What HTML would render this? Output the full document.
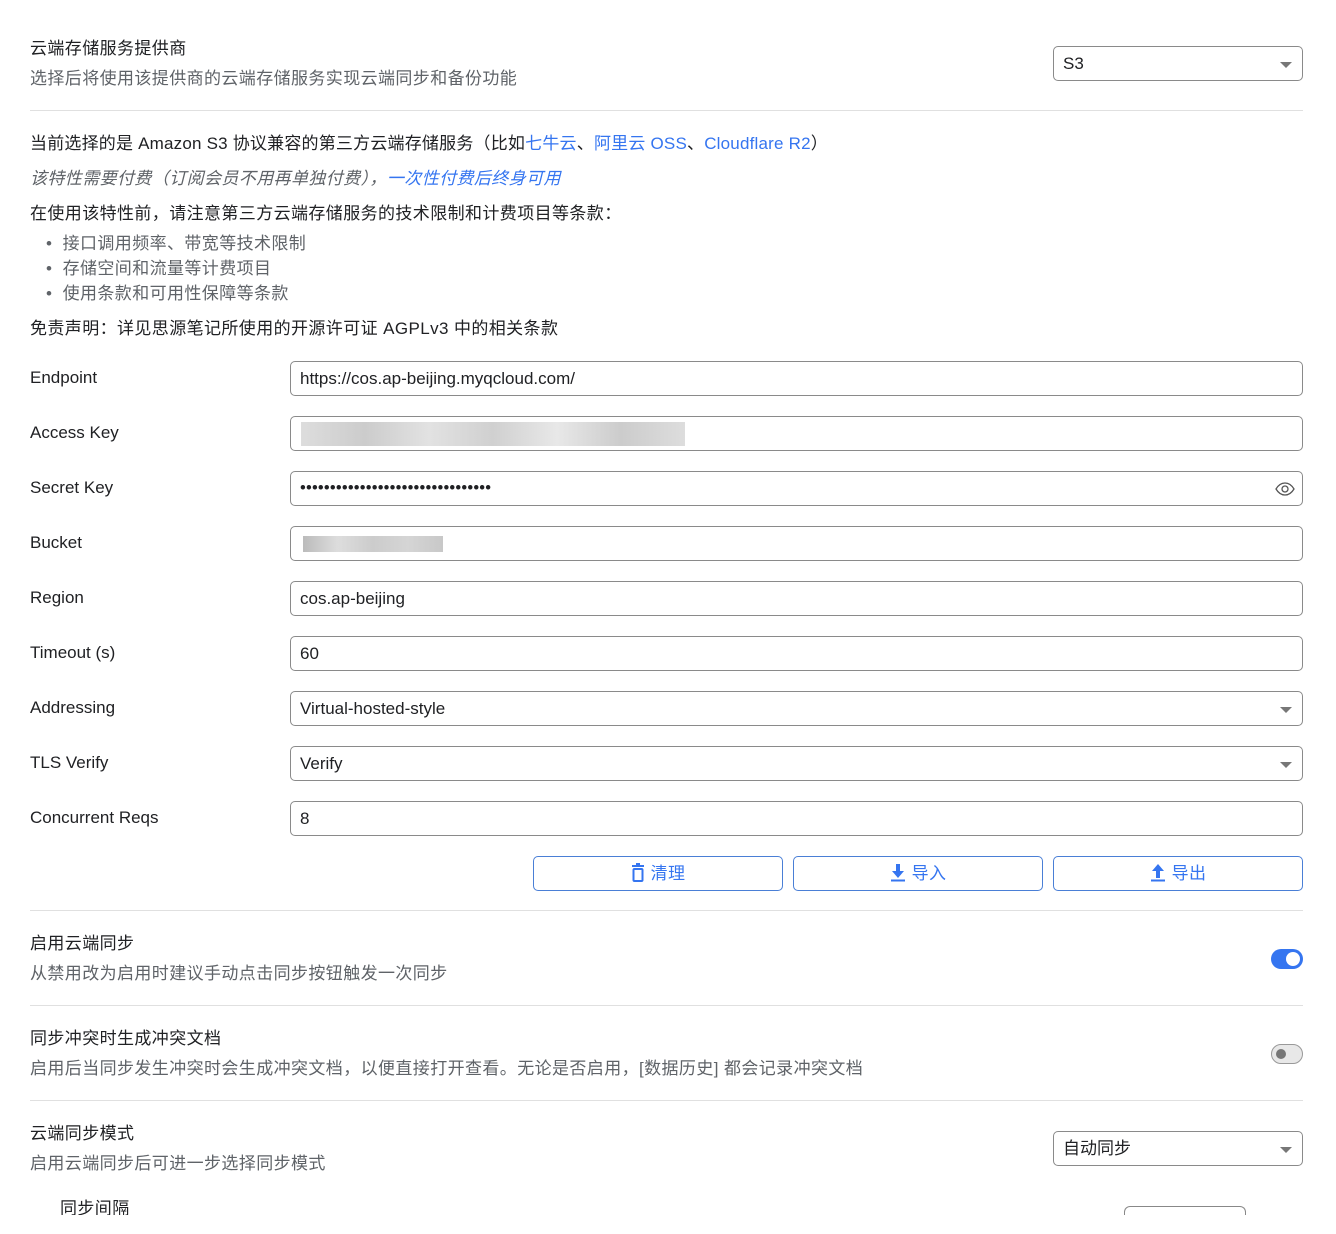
<!DOCTYPE html>
<html><head><meta charset="utf-8"><style>
*{box-sizing:border-box;margin:0;padding:0}
body{width:1336px;height:1234px;background:#fff;font-family:"Liberation Sans","Noto Sans CJK SC",sans-serif;font-size:17px;color:#202124;position:relative;overflow:hidden;letter-spacing:0.4px}
.a{position:absolute;white-space:nowrap}
.l{letter-spacing:0}
.g{color:#5f6368}
.b{color:#3575f0}
.hr{position:absolute;left:30px;width:1273px;height:1px;background:#e0e0e0}
.in{position:absolute;left:290px;width:1013px;height:35px;border:1px solid #8a8a8a;border-radius:5px;padding-left:9px;line-height:33px;font-size:17px;color:#202124;letter-spacing:0}
.sel::after{content:"";position:absolute;right:10px;top:15px;border-left:6px solid transparent;border-right:6px solid transparent;border-top:6px solid #777}
.btn{position:absolute;top:856px;width:250px;height:35px;border:1px solid #4a7fd6;border-radius:5px;color:#3575f0;text-align:center;line-height:33px;font-size:17px}
.btn svg{vertical-align:-3px;margin-right:6px}
</style></head><body>
<div class="a" style="left:30px;top:34px">云端存储服务提供商</div>
<div class="a g" style="left:30px;top:64px">选择后将使用该提供商的云端存储服务实现云端同步和备份功能</div>
<div class="in sel" style="left:1053px;width:250px;top:46px">S3</div>
<div class="hr" style="top:110px"></div>
<div class="a" style="left:30px;top:129px;letter-spacing:0.2px">当前选择的是 Amazon S3 协议兼容的第三方云端存储服务（比如<span class="b">七牛云</span>、<span class="b">阿里云 OSS</span>、<span class="b">Cloudflare R2</span>）</div>
<div class="a g" style="left:30px;top:164px;font-style:italic">该特性需要付费（订阅会员不用再单独付费），<span class="b">一次性付费后终身可用</span></div>
<div class="a" style="left:30px;top:199px">在使用该特性前，请注意第三方云端存储服务的技术限制和计费项目等条款：</div>
<div class="a g" style="left:46px;top:229px">•&nbsp; 接口调用频率、带宽等技术限制</div>
<div class="a g" style="left:46px;top:254px">•&nbsp; 存储空间和流量等计费项目</div>
<div class="a g" style="left:46px;top:279px">•&nbsp; 使用条款和可用性保障等条款</div>
<div class="a" style="left:30px;top:314px">免责声明：详见思源笔记所使用的开源许可证 AGPLv3 中的相关条款</div>

<div class="a l" style="left:30px;top:368px">Endpoint</div>
<div class="in" style="top:361px">https://cos.ap-beijing.myqcloud.com/</div>
<div class="a l" style="left:30px;top:423px">Access Key</div>
<div class="in" style="top:416px"><div style="position:absolute;left:10px;top:5px;width:384px;height:24px;background:linear-gradient(90deg,#ddd,#ccc,#e2e2e2,#d0d0d0,#e8e8e8,#ccc,#ddd)"></div></div>
<div class="a l" style="left:30px;top:478px">Secret Key</div>
<div class="in" style="top:471px;font-size:16.5px;letter-spacing:0.2px">••••••••••••••••••••••••••••••••<svg style="position:absolute;right:7px;top:9px" width="20" height="16" viewBox="0 0 20 16"><path d="M1 8C4 3 7 2 10 2s6 1 9 6c-3 5-6 6-9 6S4 13 1 8z" fill="none" stroke="#555" stroke-width="1.3"/><circle cx="10" cy="8" r="3" fill="none" stroke="#555" stroke-width="1.3"/></svg></div>
<div class="a l" style="left:30px;top:533px">Bucket</div>
<div class="in" style="top:526px"><div style="position:absolute;left:12px;top:9px;width:140px;height:16px;background:linear-gradient(90deg,#bbb,#ddd,#ccc,#d5d5d5,#c8c8c8)"></div></div>
<div class="a l" style="left:30px;top:588px">Region</div>
<div class="in" style="top:581px">cos.ap-beijing</div>
<div class="a l" style="left:30px;top:643px">Timeout (s)</div>
<div class="in" style="top:636px">60</div>
<div class="a l" style="left:30px;top:698px">Addressing</div>
<div class="in sel" style="top:691px">Virtual-hosted-style</div>
<div class="a l" style="left:30px;top:753px">TLS Verify</div>
<div class="in sel" style="top:746px">Verify</div>
<div class="a l" style="left:30px;top:808px">Concurrent Reqs</div>
<div class="in" style="top:801px">8</div>

<div class="btn" style="left:533px"><svg width="14" height="19" viewBox="0 0 14 19"><rect x="1" y="2" width="12" height="2" fill="#3575f0"/><rect x="5" y="0" width="4" height="2" fill="#3575f0"/><rect x="2.5" y="6" width="9" height="12" rx="1" fill="none" stroke="#3575f0" stroke-width="2"/></svg>清理</div>
<div class="btn" style="left:793px"><svg width="16" height="19" viewBox="0 0 16 19"><path d="M6 1h4v7h4l-6 7-6-7h4z" fill="#3575f0"/><rect x="1" y="16.5" width="14" height="2" fill="#3575f0"/></svg>导入</div>
<div class="btn" style="left:1053px"><svg width="16" height="19" viewBox="0 0 16 19"><path d="M6 15h4V8h4L8 1 2 8h4z" fill="#3575f0"/><rect x="1" y="16.5" width="14" height="2" fill="#3575f0"/></svg>导出</div>

<div class="hr" style="top:910px"></div>
<div class="a" style="left:30px;top:929px">启用云端同步</div>
<div class="a g" style="left:30px;top:959px">从禁用改为启用时建议手动点击同步按钮触发一次同步</div>
<div class="a" style="left:1271px;top:949px;width:32px;height:20px;border-radius:10px;background:#3575f0"><div style="position:absolute;right:3px;top:3px;width:14px;height:14px;border-radius:50%;background:#fff"></div></div>
<div class="hr" style="top:1005px"></div>
<div class="a" style="left:30px;top:1024px">同步冲突时生成冲突文档</div>
<div class="a g" style="left:30px;top:1054px">启用后当同步发生冲突时会生成冲突文档，以便直接打开查看。无论是否启用，[数据历史] 都会记录冲突文档</div>
<div class="a" style="left:1271px;top:1044px;width:32px;height:20px;border-radius:10px;background:#e8e8e8;border:1px solid #999"><div style="position:absolute;left:4px;top:4px;width:10px;height:10px;border-radius:50%;background:#777"></div></div>
<div class="hr" style="top:1100px"></div>
<div class="a" style="left:30px;top:1119px">云端同步模式</div>
<div class="a g" style="left:30px;top:1149px">启用云端同步后可进一步选择同步模式</div>
<div class="in sel" style="left:1053px;width:250px;top:1131px">自动同步</div>
<div class="a" style="left:60px;top:1194px">同步间隔</div>
<div class="a" style="left:1124px;top:1206px;width:122px;height:9px;border:1px solid #888;border-bottom:none;border-radius:6px 6px 0 0"></div>
<div style="position:absolute;left:0;top:1215px;width:1336px;height:19px;background:#fff;z-index:5"></div>
</body></html>
